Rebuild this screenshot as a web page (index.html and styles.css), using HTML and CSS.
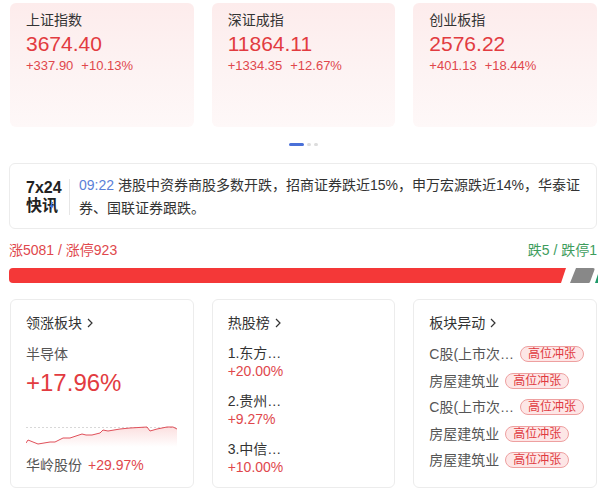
FILE: index.html
```html
<!DOCTYPE html>
<html lang="zh-CN">
<head>
<meta charset="utf-8">
<title>行情</title>
<link rel="stylesheet" href="styles.css">
</head>
<body>
<div class="page">
  <div class="indices">
    <div class="index-card">
      <div class="index-name">上证指数</div>
      <div class="index-value">3674.40</div>
      <div class="index-change"><span>+337.90</span><span class="pct">+10.13%</span></div>
    </div>
    <div class="index-card">
      <div class="index-name">深证成指</div>
      <div class="index-value">11864.11</div>
      <div class="index-change"><span>+1334.35</span><span class="pct">+12.67%</span></div>
    </div>
    <div class="index-card">
      <div class="index-name">创业板指</div>
      <div class="index-value">2576.22</div>
      <div class="index-change"><span>+401.13</span><span class="pct">+18.44%</span></div>
    </div>
  </div>

  <div class="dots"><span class="dot active"></span><span class="dot"></span><span class="dot"></span></div>

  <div class="news">
    <div class="news-brand">
      <div class="brand-top">7x24</div>
      <div class="brand-bottom">快讯<svg class="bolt" viewBox="0 0 5 9" width="5" height="9"><path d="M3.2 0 L0.3 5 H2.4 L1.4 9 L4.8 3.6 H2.7 L4.2 0 Z" fill="#3b73e6"/></svg></div>
    </div>
    <div class="news-sep"></div>
    <p class="news-text"><span class="news-time">09:22 </span><span class="news-body">港股中资券商股多数开跌，招商证券跌近15%，申万宏源跌近14%，华泰证券、国联证券跟跌。</span></p>
  </div>

  <div class="breadth">
    <div class="breadth-labels"><span class="up">涨5081 / 涨停923</span><span class="down">跌5 / 跌停1</span></div>
    <svg class="breadth-bar" viewBox="0 0 589 15" preserveAspectRatio="none">
      <path d="M4 0 H557 L552 15 H4 A4 4 0 0 1 0 11 V4 A4 4 0 0 1 4 0 Z" fill="#f43838"/>
      <path d="M567 0 H584 A1.5 1.5 0 0 1 585.4 2 L581 14 A1.5 1.5 0 0 1 579.6 15 H561 Z" fill="#888888"/>
      <path d="M586 15 L589 6 V15 Z" fill="#1f9a6a"/>
    </svg>
  </div>

  <div class="panels">
    <div class="panel">
      <div class="panel-title">领涨板块<svg class="chev" viewBox="0 0 6 10" width="6" height="10"><polyline points="1,1 5,5 1,9" fill="none" stroke="#333" stroke-width="1.2"/></svg></div>
      <div class="sector">半导体</div>
      <div class="sector-pct">+17.96%</div>
      <svg class="chart" viewBox="0 0 152 24" width="152" height="24">
        <defs>
          <linearGradient id="fillg" x1="0" y1="0" x2="0" y2="1">
            <stop offset="0" stop-color="#f07070" stop-opacity="0.22"/>
            <stop offset="1" stop-color="#f07070" stop-opacity="0"/>
          </linearGradient>
        </defs>
        <line x1="0" y1="4.5" x2="152" y2="4.5" stroke="#d8d8d8" stroke-width="1" stroke-dasharray="2 2"/>
        <path d="M0 20 L2 17 L7 19 L12 21 L24 19 L29 19 L37 15 L44 15 L56 11 L60 12 L66 12 L74 10 L77 7 L82 8 L94 6 L104 5 L121 4 L124 8 L131 6 L141 4 L147 4 L151 6 V24 H0 Z" fill="url(#fillg)"/>
        <polyline points="0,20 2,17 7,19 12,21 24,19 29,19 37,15 44,15 56,11 60,12 66,12 74,10 77,7 82,8 94,6 104,5 121,4 124,8 131,6 141,4 147,4 151,6" fill="none" stroke="#e0505a" stroke-width="1"/>
      </svg>
      <div class="stock"><span class="stock-name">华岭股份</span><span class="red">+29.97%</span></div>
    </div>

    <div class="panel">
      <div class="panel-title">热股榜<svg class="chev" viewBox="0 0 6 10" width="6" height="10"><polyline points="1,1 5,5 1,9" fill="none" stroke="#333" stroke-width="1.2"/></svg></div>
      <div class="hot-list">
        <div class="hot-item"><div class="hot-name">1.东方…</div><div class="hot-pct">+20.00%</div></div>
        <div class="hot-item"><div class="hot-name">2.贵州…</div><div class="hot-pct">+9.27%</div></div>
        <div class="hot-item"><div class="hot-name">3.中信…</div><div class="hot-pct">+10.00%</div></div>
      </div>
    </div>

    <div class="panel">
      <div class="panel-title">板块异动<svg class="chev" viewBox="0 0 6 10" width="6" height="10"><polyline points="1,1 5,5 1,9" fill="none" stroke="#333" stroke-width="1.2"/></svg></div>
      <div class="move-list">
        <div class="move-row"><span class="move-name">C股(上市次…</span><span class="tag">高位冲张</span></div>
        <div class="move-row"><span class="move-name">房屋建筑业</span><span class="tag">高位冲张</span></div>
        <div class="move-row"><span class="move-name">C股(上市次…</span><span class="tag">高位冲张</span></div>
        <div class="move-row"><span class="move-name">房屋建筑业</span><span class="tag">高位冲张</span></div>
        <div class="move-row"><span class="move-name">房屋建筑业</span><span class="tag">高位冲张</span></div>
      </div>
    </div>
  </div>
</div>
</body>
</html>
```

FILE: styles.css
```css
* { box-sizing: border-box; }

html, body {
  margin: 0;
  padding: 0;
  background: #ffffff;
}

body {
  font-family: "Liberation Sans", "Noto Sans CJK SC", sans-serif;
  font-size: 14px;
  color: #333333;
  width: 607px;
  height: 494px;
  overflow: hidden;
}

.page {
  padding: 3px 10px 0 10px;
}

/* top index cards */
.indices {
  display: grid;
  grid-template-columns: repeat(3, minmax(0, 1fr));
  column-gap: 18px;
}

.index-card {
  height: 124px;
  padding: 7px 16px;
  border-radius: 6px;
  background: linear-gradient(180deg, #fdecec 0%, #fdf3f3 55%, #fef8f8 100%);
}

.index-name {
  font-size: 14px;
  line-height: 20px;
  color: #333333;
}

.index-value {
  font-size: 21px;
  line-height: 28px;
  color: #e23b40;
}

.index-change {
  font-size: 13px;
  line-height: 16px;
  color: #e0474c;
  display: flex;
  gap: 8px;
}

/* pagination dots */
.dots {
  display: flex;
  justify-content: center;
  align-items: center;
  gap: 3px;
  margin-top: 16px;
  height: 3px;
}

.dot {
  width: 4px;
  height: 3px;
  border-radius: 2px;
  background: #dddddd;
}

.dot.active {
  width: 15px;
  background: #4a70d8;
}

/* news */
.news {
  margin-top: 17px;
  margin-left: -1px;
  border: 1px solid #ececec;
  border-radius: 6px;
  display: flex;
  align-items: center;
  padding: 10px 12px 8px 16px;
}

.news-brand {
  width: 36px;
  flex: none;
  font-weight: bold;
  font-size: 16px;
  line-height: 18px;
  color: #222222;
}

.brand-bottom {
  position: relative;
  font-size: 16px;
}

.bolt {
  position: absolute;
  left: 23px;
  top: 5px;
}

.news-sep {
  width: 1px;
  height: 36px;
  flex: none;
  background: #e6e6e6;
  margin: 0 9px 0 7px;
}

.news-text {
  flex: 1;
  min-width: 0;
  margin: 0;
  font-size: 14px;
  line-height: 23px;
  color: #333333;
}

.news-time {
  color: #5a7fd8;
}

/* breadth */
.breadth {
  margin-top: 11px;
  margin-left: -1px;
}

.breadth-labels {
  display: flex;
  justify-content: space-between;
  font-size: 14px;
  line-height: 20px;
}

.up { color: #e0474c; }
.down { color: #3d9c5c; }

.breadth-bar {
  display: block;
  width: 589px;
  height: 15px;
  margin-top: 8px;
}

/* bottom panels */
.panels {
  display: grid;
  grid-template-columns: repeat(3, minmax(0, 1fr));
  column-gap: 18px;
  margin-top: 16px;
}

.panel {
  height: 189px;
  min-width: 0;
  border: 1px solid #ececec;
  border-radius: 6px;
  padding: 13px 11px 13px 15px;
}

.panel-title {
  display: flex;
  align-items: center;
  gap: 5px;
  font-size: 14px;
  line-height: 20px;
  color: #333333;
}

.chev { display: block; }

.sector {
  margin-top: 12px;
  line-height: 18px;
  color: #555555;
}

.sector-pct {
  margin-top: 5px;
  font-size: 24px;
  line-height: 30px;
  color: #e23b40;
}

.chart {
  display: block;
  margin-top: 25px;
}

.stock {
  margin-top: 9px;
  line-height: 18px;
  display: flex;
  gap: 6px;
}

.stock-name { color: #555555; }
.red { color: #e0474c; }

.hot-list {
  margin-top: 11px;
  display: flex;
  flex-direction: column;
  gap: 11px;
}

.hot-name {
  line-height: 18px;
  color: #333333;
}

.hot-pct {
  line-height: 19px;
  color: #e0474c;
}

.move-list {
  margin-top: 8px;
}

.move-row {
  height: 26.5px;
  display: flex;
  align-items: center;
  gap: 6px;
}

.move-name {
  color: #555555;
  line-height: 18px;
  white-space: nowrap;
}

.tag {
  display: inline-flex;
  align-items: center;
  height: 16px;
  padding: 0 7px;
  border-radius: 8px;
  border: 1px solid #eea0a0;
  background: #fde6e6;
  color: #e03a40;
  font-size: 12px;
  line-height: 14px;
  white-space: nowrap;
}
```
